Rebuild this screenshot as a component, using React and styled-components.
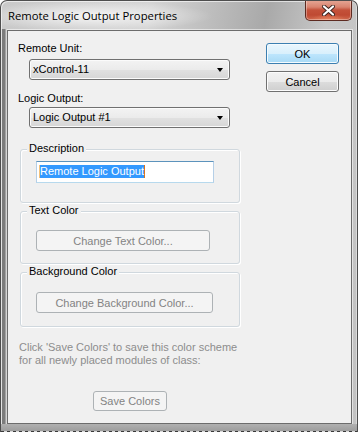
import React from 'react';
import styled, { createGlobalStyle } from 'styled-components';

// page reset
const GlobalStyle = createGlobalStyle`
  html, body {
    margin: 0;
    padding: 0;
    background: #ffffff;
  }
  body {
    font-family: "Liberation Sans", Arial, sans-serif;
    font-size: 11px;
    color: #000000;
  }
`;

const Window = styled.div`
  width: 358px;
  height: 432px;
  box-sizing: border-box;
  display: flex;
  flex-direction: column;
  border: 1px solid #4e4e4e;
  border-bottom: 0;
  border-radius: 7px 7px 0 0;
  overflow: hidden;
  background:
    linear-gradient(90deg, #b9b9b9 0 1px, #7c7c7c 1px 4px, #a4a4a4 4px 6px) left 0 top 28px / 6px 100% no-repeat,
    radial-gradient(ellipse 120px 15px at 92px 15px, rgba(255, 255, 255, 0.8), rgba(255, 255, 255, 0) 100%),
    linear-gradient(100deg, #c9c9c9 0%, #d4d4d4 35%, #b4b4b4 55%, #a9a9a9 62%, #c7c7c7 76%, #c2c2c2 100%);
  box-shadow: inset 1px 1px 0 rgba(255, 255, 255, 0.6), inset -1px 0 0 rgba(255, 255, 255, 0.4);
`;

const TitleBar = styled.div`
  height: 29px;
  flex: none;
  display: flex;
  justify-content: space-between;
  align-items: flex-start;
  padding-left: 7px;
`;

const Title = styled.div`
  font-family: "Open Sans", "Liberation Sans", sans-serif;
  font-size: 11.3px;
  line-height: 16px;
  padding-top: 7px;
  color: #000000;
`;

const CloseButton = styled.div`
  width: 47px;
  height: 21px;
  margin: -1px 5px 0 0;
  box-sizing: border-box;
  display: flex;
  align-items: center;
  justify-content: center;
  border: 1px solid #5d2a20;
  border-top: 0;
  border-radius: 0 0 5px 5px;
  background:
    radial-gradient(ellipse 18px 6px at 50% 100%, rgba(240, 140, 100, 0.8), rgba(240, 140, 100, 0) 100%),
    linear-gradient(#e6a897 0%, #d98470 35%, #c4513a 50%, #bf4a33 75%, #d0694e 100%);
  box-shadow: inset 0 0 0 1px rgba(255, 255, 255, 0.35);
`;

const Client = styled.div`
  flex: 1;
  margin: 0 5px 0 6px;
  border: 1px solid #6c6c6c;
  background: #f0f0f0;
  display: flex;
  box-shadow: 0 0 0 1px rgba(255, 255, 255, 0.55);
`;

const BottomEdge = styled.div`
  height: 8px;
  flex: none;
  background:
    repeating-linear-gradient(90deg, #3a3a3a 0 3px, #d8d8d8 3px 6px) bottom / 100% 1px no-repeat,
    linear-gradient(#b0b0b0, #9a9a9a);
`;

const LeftCol = styled.div`
  width: 240px;
  padding-top: 11px;
  display: flex;
  flex-direction: column;
  align-items: flex-start;
`;

const RightCol = styled.div`
  padding: 12px 0 0 18px;
  display: flex;
  flex-direction: column;
  gap: 7px;
`;

const FieldLabel = styled.div`
  line-height: 13px;
  margin: ${p => p.$mt}px 0 0 10px;
`;

const Select = styled.div`
  margin: ${p => p.$mt}px 0 0 21px;
  width: 201px;
  height: 21px;
  box-sizing: border-box;
  border: 1px solid #707070;
  border-radius: 3px;
  background: linear-gradient(#f3f3f3 0%, #ebebeb 50%, #e1e1e1 51%, #d6d6d6 100%);
  box-shadow: inset 0 0 0 1px #fbfbfb;
  display: flex;
  align-items: center;
  justify-content: space-between;
  padding: 0 6px 0 3px;
  line-height: 13px;
`;

const Arrow = styled.span`
  width: 0;
  height: 0;
  border-left: 3.5px solid transparent;
  border-right: 3.5px solid transparent;
  border-top: 4px solid #000000;
`;

const Group = styled.div`
  margin: ${p => p.$mt}px 0 0 12px;
  width: 220px;
  height: ${p => p.$h}px;
  box-sizing: border-box;
  border: 1px solid #d0d8de;
  border-radius: 3px;
  box-shadow: inset 1px 1px 0 #ffffff, 1px 1px 0 #ffffff;
  padding-left: 15px;
  display: flex;
  flex-direction: column;
  align-items: flex-start;
`;

const GroupTitle = styled.div`
  margin: -8px 0 0 -9px;
  padding: 0 2px;
  line-height: 13px;
  background: #f0f0f0;
`;

const TextBox = styled.div`
  margin-top: 6px;
  width: 178px;
  height: 22px;
  box-sizing: border-box;
  border: 1px solid;
  border-color: #5c93bc #b5cfe7 #b7d9ed #b5cfe7;
  background: #ffffff;
  padding: 3px 0 0 3px;
  line-height: 13px;
`;

const Selected = styled.span`
  display: inline-block;
  background: #3399ff;
  color: #ffffff;
  box-shadow: -1px 0 0 #f4c27a, 1px 0 0 #d9731c;
`;

const PushButton = styled.button`
  display: block;
  width: ${p => p.$w}px;
  height: ${p => p.$h || 21}px;
  margin: ${p => p.$m || 0};
  box-sizing: border-box;
  padding: 0;
  font-family: "Liberation Sans", Arial, sans-serif;
  font-size: 11px;
  border-radius: 3px;
  border: 1px solid ${p => (p.$default ? '#3c7fb1' : '#707070')};
  background: ${p => (p.$default
    ? 'linear-gradient(#eaf6fd 0%, #d9f0fc 50%, #bee6fd 51%, #a7d9f5 100%)'
    : 'linear-gradient(#f2f2f2 0%, #ebebeb 50%, #dddddd 51%, #cfcfcf 100%)')};
  box-shadow: inset 0 0 0 1px ${p => (p.$default ? '#f4fbfe' : '#fcfcfc')};
  color: #000000;

  &:disabled {
    border-color: #adb2b5;
    background: #f4f4f4;
    box-shadow: none;
    color: #838383;
  }
`;

const Note = styled.p`
  margin: 14px 0 0 11px;
  line-height: 13px;
  color: #8d8d8d;
`;

const App = () => (
  <>
    <GlobalStyle />
    <Window>
      <TitleBar>
        <Title>Remote Logic Output Properties</Title>
        <CloseButton>
          <svg width="13" height="11" viewBox="0 0 13 11">
            <path d="M2 1.5 L11 9.5 M11 1.5 L2 9.5" stroke="#3c2520" strokeWidth="4" strokeLinecap="round" />
            <path d="M2 1.5 L11 9.5 M11 1.5 L2 9.5" stroke="#ffffff" strokeWidth="2.2" strokeLinecap="round" />
          </svg>
        </CloseButton>
      </TitleBar>
      <Client>
        <LeftCol>
          <FieldLabel $mt={0}>Remote Unit:</FieldLabel>
          <Select $mt={4}>
            <span>xControl-11</span>
            <Arrow />
          </Select>
          <FieldLabel $mt={12}>Logic Output:</FieldLabel>
          <Select $mt={2}>
            <span>Logic Output #1</span>
            <Arrow />
          </Select>

          <Group $mt={21} $h={54}>
            <GroupTitle>Description</GroupTitle>
            <TextBox>
              <Selected>Remote Logic Output</Selected>
            </TextBox>
          </Group>

          <Group $mt={8} $h={53}>
            <GroupTitle>Text Color</GroupTitle>
            <PushButton disabled $w={174} $m="13px 0 0 0">Change Text Color...</PushButton>
          </Group>

          <Group $mt={8} $h={55}>
            <GroupTitle>Background Color</GroupTitle>
            <PushButton disabled $w={177} $m="14px 0 0 0">Change Background Color...</PushButton>
          </Group>

          <Note>
            Click 'Save Colors' to save this color scheme<br />
            for all newly placed modules of class:
          </Note>
          <PushButton disabled $w={74} $h={20} $m="24px 0 0 85px">Save Colors</PushButton>
        </LeftCol>
        <RightCol>
          <PushButton $default $w={73}>OK</PushButton>
          <PushButton $w={73}>Cancel</PushButton>
        </RightCol>
      </Client>
      <BottomEdge />
    </Window>
  </>
);

export default App;
